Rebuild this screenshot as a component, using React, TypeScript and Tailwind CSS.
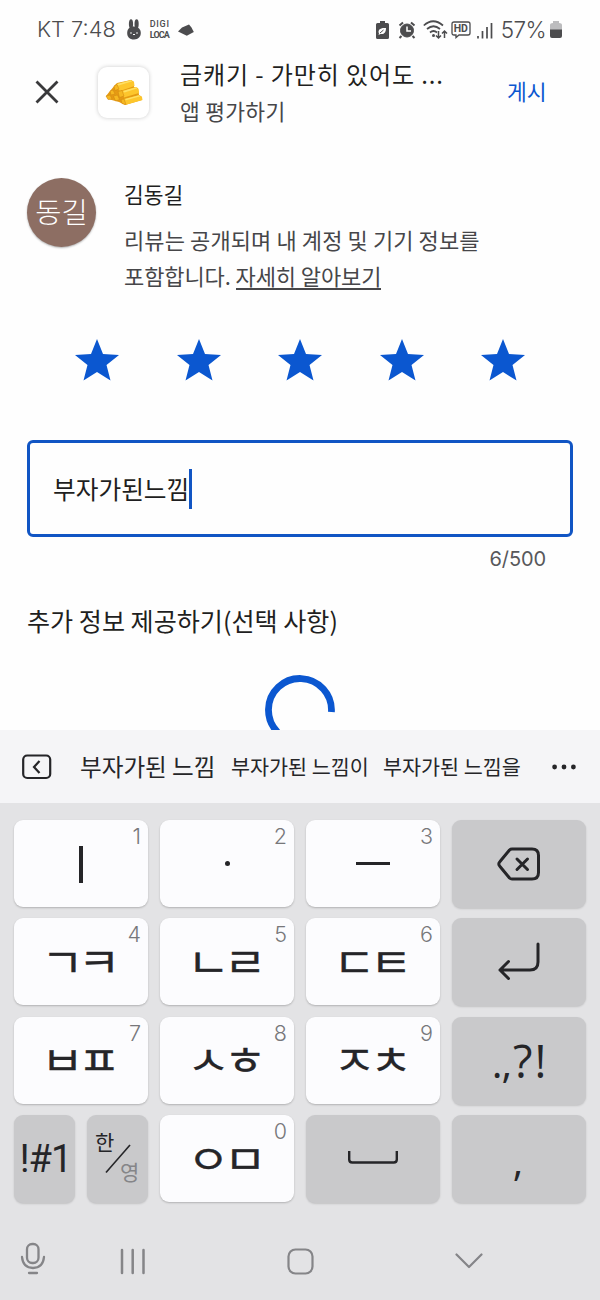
import type { ReactNode } from "react"

const STARS = [1, 2, 3, 4, 5]

// Letter key with a small digit in the corner
const Key = ({ digit, children }: { digit: string; children: ReactNode }) => (
  <div className="relative flex h-[87px] items-center justify-center rounded-[9px] bg-[#fcfcfe] text-[#252528] shadow-[0_1px_2px_rgba(0,0,0,0.22)]">
    <span className="absolute right-[7px] top-[3px] font-['Inter'] text-[21.500px] font-light leading-[26px] text-[#77777a]">
      {digit}
    </span>
    {children}
  </div>
)

const Jamo = ({ children }: { children: ReactNode }) => (
  <span className="block translate-x-[-3px] translate-y-[-2px] scale-y-[0.86] whitespace-nowrap text-[46px] leading-none tracking-[-5.6px] [-webkit-text-stroke:0.4px_#252528]">
    {children}
  </span>
)

const DarkKey = ({ className = "", children }: { className?: string; children: ReactNode }) => (
  <div
    className={`relative flex h-[88px] items-center justify-center rounded-[9px] bg-[#c9c9cb] text-[#252528] shadow-[0_1px_2px_rgba(0,0,0,0.15)] ${className}`}
  >
    {children}
  </div>
)

const StatusBar = () => (
  <div className="flex h-[60px] items-center pl-[37px] pr-[38px] text-[#4c4c4e]">
    <span className="font-['Inter'] text-[21.800px] font-light leading-none">KT 7:48</span>
    <svg className="ml-[10px]" width="16" height="22" viewBox="0 0 16 22" fill="currentColor">
      <ellipse cx="5" cy="5" rx="2.1" ry="4.8" />
      <ellipse cx="10.6" cy="5" rx="2.1" ry="4.8" />
      <path d="M8 7.5c4.500 0 6.800 3 6.800 6.500S12.500 20.500 8 20.500 1.200 18 1.200 14 3.500 7.500 8 7.500z" />
      <circle cx="5" cy="14" r=".8" fill="#fff" />
      <circle cx="11" cy="14" r=".8" fill="#fff" />
      <path d="M7 15l1 1 1-1" stroke="#fff" fill="none" />
    </svg>
    <span className="ml-[8px] flex w-[20px] flex-col font-['Roboto'] text-[9px] leading-[11px]">
      <span className="font-medium tracking-[0.7px]">DIGI</span>
      <span className="font-bold tracking-[-0.9px]">LOCA</span>
    </span>
    <svg className="ml-[8px]" width="16" height="13" viewBox="0 0 16 13" fill="currentColor">
      <path d="M0 7.500L4 3.500 11 .5l2.500 3L15.800 8l-7 3.800z" />
    </svg>

    <svg className="ml-auto" width="13" height="18" viewBox="0 0 13 18">
      <path d="M4 0h5v2h2.500q1.500 0 1.500 1.500v13q0 1.500-1.500 1.500h-10Q0 18 0 16.500v-13Q0 2 1.500 2H4z" fill="currentColor" />
      <path d="M10 7c-6-.5-8.500 2-7 5.500L2.500 14l2-1C8.500 13.500 10 11 10 7z" fill="#fff" />
      <path d="M4 12l3.500-3" stroke="#4c4c4e" />
    </svg>
    <svg className="ml-[9px]" width="18" height="18" viewBox="0 0 18 18" fill="none" stroke="currentColor">
      <circle cx="9" cy="9.500" r="6.500" fill="currentColor" />
      <path d="M1.500 4.500L5 1.500M16.500 4.500L13 1.500M3.500 15l-2 2M14.500 15l2 2" strokeWidth="2" />
      <path d="M9 5.500v4.500h4" stroke="#fff" strokeWidth="1.500" />
    </svg>
    <svg className="ml-[7px]" width="25" height="20" viewBox="0 0 25 20" fill="none" stroke="currentColor" strokeWidth="1.700">
      <path d="M.8 5.500Q10-3 20 5.500M4 9q6.500-5.500 13 0M7 12.500q3.500-3 7 0" />
      <circle cx="10.500" cy="15.500" r="1.500" fill="currentColor" stroke="none" />
      <path d="M15.500 11v7M13 15.500l2.500 2.500 2.500-2.500M21.500 18v-7M19 13.500l2.500-2.500 2.500 2.500" strokeWidth="1.500" />
    </svg>
    <span className="relative ml-[3px] flex h-[18px] w-[20px] justify-center">
      <svg className="absolute left-0 top-0" width="20" height="18" viewBox="0 0 20 18" fill="none" stroke="currentColor" strokeWidth="1.300">
        <path d="M3 1h14q2 0 2 2v9q0 2-2 2H8l-3 2.500V14H3q-2 0-2-2V3q0-2 2-2z" />
      </svg>
      <span className="font-['Roboto'] text-[10.500px] font-bold leading-[15px]">HD</span>
    </span>
    <svg className="ml-[6px]" width="16" height="17" viewBox="0 0 16 17" fill="none" stroke="currentColor" strokeWidth="1.700">
      <path d="M1 14v2.500M5.500 9v7.500M10 5v11.500M14.500 1v15.500" />
    </svg>
    <span className="ml-[8px] font-['Inter'] text-[22.500px] font-light leading-none tracking-[-0.600px]">57%</span>
    <svg className="ml-[4px]" width="12" height="18" viewBox="0 0 12 18">
      <path d="M3 0h6v2q3 0 3 2v5H0V4q0-2 3-2z" fill="#bcbcbe" />
      <path d="M0 8.500h12V15q0 2-2 2H2q-2 0-2-2z" fill="currentColor" />
    </svg>
  </div>
)

const GoldBars = () => (
  <svg width="38" height="27" viewBox="0 0 38 27" strokeLinejoin="round">
    <path d="M1 17L5 12 10 6 12 4 26 1 29 3 29 8 33 9 34 16 37 18 37 21 20 26 14 23 3 20z" fill="#e59a13" />
    <g fill="#fdc62c">
      <path d="M12 5L26 1l3 2 .5 4L15 12l-3-3z" />
      <path d="M17 12L31 8l2.500 2 .5 4L19 18.500z" />
      <path d="M19 20L34 16l3 2 .5 3L20 26z" />
    </g>
    <g fill="#ffdf62">
      <path d="M12 5L26 1.200l1.500 1L13.500 6.500zM18 12l13-3.800 1.500 1L19.500 13.500zM20 20l14-3.800 1.500 1-14.500 4.100z" />
    </g>
    <g fill="#f6b821" stroke="#cf8512" strokeWidth=".5">
      <path d="M9 7l3-1.500 2 4.500-4 1.500zM5 12l3-1 2 4-4 1zM13 12.500l4-1 2 5.500-4.500 1.500zM1 17l4-1 2 4-4 .5zM8.500 17l4-1 2 4.500-4 1.500zM16 20.500l3-.5 2 5.500-4-1z" />
    </g>
  </svg>
)

const Header = () => (
  <div className="flex h-[64px] items-center">
    <svg className="ml-[35px] shrink-0" width="24" height="24" viewBox="0 0 24 24" stroke="#39393b" strokeWidth="2.800">
      <path d="M1.500 1.500l21 21M22.500 1.500l-21 21" />
    </svg>
    <div className="ml-[39px] flex size-[51px] shrink-0 items-center justify-center rounded-[9px] bg-white shadow-[0_0_4px_rgba(0,0,0,0.2)]">
      <GoldBars />
    </div>
    <div className="mb-[1px] ml-[31px] w-[300px] whitespace-nowrap">
      <div className="text-[24px] leading-[37px] tracking-[0.9px] text-[#1f1f21]">금캐기 - 가만히 있어도 ...</div>
      <div className="text-[21.500px] leading-[37px] tracking-[0.3px] text-[#464649]">앱 평가하기</div>
    </div>
    <div className="mb-[3px] ml-[27px] whitespace-nowrap text-[21.500px] leading-none text-[#0b57d0]">게시</div>
  </div>
)

const Profile = () => (
  <div className="mt-[54px] flex pl-[27px]">
    <div className="flex size-[69px] items-center justify-center rounded-full bg-[#8d6e63] pb-[2px] text-[28.500px] font-light leading-none text-white shadow-[0_1px_2px_rgba(0,0,0,0.3)]">
      동길
    </div>
    <div className="ml-[28px] whitespace-nowrap">
      <div className="text-[21.500px] leading-[32px] text-[#1f1f21]">김동길</div>
      <div className="mt-[11px] text-[22px] leading-[36px] text-[#464649]">
        <span className="tracking-[0.1px]">리뷰는 공개되며 내 계정 및 기기 정보를</span>
        <br />
        <span className="tracking-[-0.1px]">
          포함합니다. <span className="inline-block border-b-2 border-[#464649] leading-[25px]">자세히 알아보기</span>
        </span>
      </div>
    </div>
  </div>
)

const SpinnerRow = () => (
  <div className="mt-[35px] flex h-[60px] justify-center overflow-hidden">
    <svg className="shrink-0" width="70" height="70" viewBox="0 0 70 70" fill="none" stroke="#0b57d0" strokeWidth="6.800">
      <path d="M35 66.500A31.500 31.500 0 1 1 66.400 37" />
    </svg>
  </div>
)

const Suggestions = () => (
  <div className="flex h-[73px] items-center whitespace-nowrap bg-[#f5f5f7] text-[#252528]">
    <svg className="ml-[22px]" width="30" height="26" viewBox="0 0 30 26" fill="none" stroke="currentColor" strokeWidth="2.200">
      <rect x="1.200" y="1.500" width="27" height="22.500" rx="4" />
      <path d="M17.500 7l-5.500 6 5.500 6" />
    </svg>
    <span className="ml-[28px] w-[151px] text-[23.600px] leading-none">부자가된 느낌</span>
    <span className="w-[152px] text-[20.700px] leading-none">부자가된 느낌이</span>
    <span className="w-[169px] text-[20.700px] leading-none">부자가된 느낌을</span>
    <svg width="24" height="6" viewBox="0 0 24 6" fill="currentColor">
      <circle cx="2.600" cy="3" r="2.400" />
      <circle cx="12" cy="3" r="2.400" />
      <circle cx="21.400" cy="3" r="2.400" />
    </svg>
  </div>
)

const Keyboard = () => (
  <div className="grid h-[412px] auto-rows-[98.400px] grid-cols-[134px_134px_134px_134px] gap-x-[12px] bg-[#e3e3e5] px-[14px] pt-[17px]">
    <Key digit="1">
      <span className="block h-[37px] w-[4px] translate-y-[1px] bg-[#252528]" />
    </Key>
    <Key digit="2">
      <span className="block size-[5px] rounded-full bg-[#252528]" />
    </Key>
    <Key digit="3">
      <span className="block h-[3.500px] w-[34px] bg-[#252528]" />
    </Key>
    <DarkKey>
      <svg width="44" height="34" viewBox="0 0 44 34" fill="none" stroke="currentColor" strokeWidth="3" strokeLinecap="round" strokeLinejoin="round">
        <path d="M15 2h20q6.500 0 6.500 6.500v17q0 6.500-6.500 6.500H15q-1.500 0-2.500-1L3 19.500q-2.500-2.500 0-5L12.500 3q1-1 2.500-1z" />
        <path d="M20 12l10.500 10.500M30.500 12L20 22.500" />
      </svg>
    </DarkKey>

    <Key digit="4"><Jamo>ㄱㅋ</Jamo></Key>
    <Key digit="5"><Jamo>ㄴㄹ</Jamo></Key>
    <Key digit="6"><Jamo>ㄷㅌ</Jamo></Key>
    <DarkKey>
      <svg className="mb-[2px]" width="42" height="38" viewBox="0 0 42 38" fill="none" stroke="currentColor" strokeWidth="3" strokeLinecap="round" strokeLinejoin="round">
        <path d="M40 2v18q0 8-8 8H2M10.500 19.500L2 28l8.500 8.500" />
      </svg>
    </DarkKey>

    <Key digit="7"><Jamo>ㅂㅍ</Jamo></Key>
    <Key digit="8"><Jamo>ㅅㅎ</Jamo></Key>
    <Key digit="9"><Jamo>ㅈㅊ</Jamo></Key>
    <DarkKey>
      <span className="flex translate-x-[1px] items-baseline font-['Open_Sans'] leading-none">
        <span className="text-[41px] tracking-[-1px]">.,</span>
        <span className="ml-[2px] text-[45px] tracking-[2px]">?!</span>
      </span>
    </DarkKey>

    <div className="flex gap-[12px]">
      <DarkKey className="w-[61px]">
        <span className="translate-x-[1px] whitespace-nowrap font-['Roboto'] text-[38px] leading-none tracking-[-1px]">!#1</span>
      </DarkKey>
      <DarkKey className="w-[61px]">
        <span className="absolute left-[8px] top-[16px] text-[21px] leading-[21px]">한</span>
        <svg className="absolute left-[18px] top-[29px]" width="26" height="30" stroke="currentColor" strokeWidth="1.600">
          <path d="M1 28.500L25 1" />
        </svg>
        <span className="absolute left-[33px] top-[46px] text-[21px] leading-[21px] text-[#858588]">영</span>
      </DarkKey>
    </div>
    <Key digit="0"><Jamo>ㅇㅁ</Jamo></Key>
    <DarkKey>
      <svg className="mb-[3px]" width="50" height="13" viewBox="0 0 50 13" fill="none" stroke="currentColor" strokeWidth="2.400">
        <path d="M1.200 0v8.500q0 3 3 3h41.600q3 0 3-3V0" />
      </svg>
    </DarkKey>
    <DarkKey>
      <span className="translate-x-[-1px] translate-y-[2px] font-['Open_Sans'] text-[40px] font-medium leading-none">,</span>
    </DarkKey>
  </div>
)

const NavBar = () => (
  <div className="flex h-[85px] items-start bg-[#e3e3e5] text-[#858588]">
    <svg className="ml-[20px] mt-[27px]" width="26" height="33" viewBox="0 0 26 33" fill="none" stroke="currentColor" strokeWidth="2.300" strokeLinecap="round">
      <rect x="7" y="2" width="11.500" height="19" rx="5.200" />
      <path d="M2 15q1 11 11 11t11-11M9 31h8" />
    </svg>
    <svg className="ml-[74px] mt-[33px]" width="26" height="27" viewBox="0 0 26 27" stroke="currentColor" strokeWidth="2.500" strokeLinecap="round">
      <path d="M2 2v23M12.700 2v23M23.500 2v23" />
    </svg>
    <svg className="ml-[141px] mt-[33px]" width="27" height="27" viewBox="0 0 27 27" fill="none" stroke="currentColor" strokeWidth="2.200">
      <rect x="1.500" y="1.500" width="24" height="24" rx="7" />
    </svg>
    <svg className="ml-[141px] mt-[38px]" width="28" height="17" viewBox="0 0 28 17" fill="none" stroke="currentColor" strokeWidth="2.200" strokeLinecap="round" strokeLinejoin="round">
      <path d="M1.500 1.500L14 14 26.500 1.500" />
    </svg>
  </div>
)

export default function App() {
  return (
    <div className="flex h-[1300px] w-[600px] flex-col overflow-hidden bg-[#fefefe] font-['Noto_Sans_CJK_KR',sans-serif]">
      <div className="h-[730px] shrink-0 overflow-hidden">
        <StatusBar />
        <Header />
        <Profile />

        {/* Rating */}
        <div className="mt-[46px] flex justify-between px-[75px]">
          {STARS.map((n) => (
            <svg key={n} width="44" height="42" viewBox="0 0 44 42" fill="#0b57d0">
              <path d="M22 0l6 15 16 1-12.500 10L35.500 41.500 22 33 8.500 41.500 12.500 26 0 16l16-1z" />
            </svg>
          ))}
        </div>

        {/* Review text */}
        <div className="mx-[27px] mt-[59px] flex h-[97px] items-center rounded-[6px] border-[3px] border-[#1155c4] pl-[23px]">
          <span className="text-[24.700px] leading-none text-[#1f1f21]">부자가된느낌</span>
          <span className="h-[40px] w-[3px] bg-[#1155c4]" />
        </div>
        <div className="mr-[54px] mt-[7px] text-right font-['Inter'] text-[20px] leading-[30px] tracking-[-0.1px] text-[#58585b]">
          6/500
        </div>
        <div className="ml-[27px] mt-[26px] text-[25.100px] leading-[40px] text-[#1f1f21]">추가 정보 제공하기(선택 사항)</div>
        <SpinnerRow />
      </div>

      <Suggestions />
      <Keyboard />
      <NavBar />
    </div>
  )
}
